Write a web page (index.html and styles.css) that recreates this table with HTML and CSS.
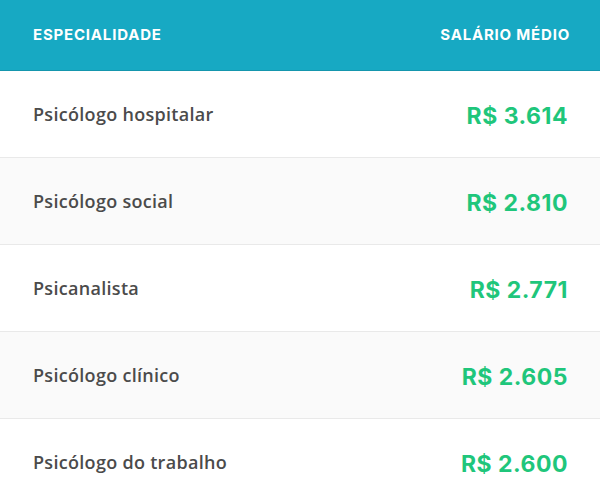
FILE: index.html
```html
<!DOCTYPE html>
<html lang="pt-BR">
<head>
<meta charset="utf-8">
<link rel="stylesheet" href="styles.css">
</head>
<body>
<table class="salary-table">
  <thead>
    <tr class="head-row">
      <th class="col-name">Especialidade</th>
      <th class="col-value">Salário médio</th>
    </tr>
  </thead>
  <tbody>
    <tr class="row"><td class="name">Psicólogo hospitalar</td><td class="value">R$ 3.614</td></tr>
    <tr class="row alt"><td class="name">Psicólogo social</td><td class="value">R$ 2.810</td></tr>
    <tr class="row"><td class="name">Psicanalista</td><td class="value">R$ 2.771</td></tr>
    <tr class="row alt"><td class="name">Psicólogo clínico</td><td class="value">R$ 2.605</td></tr>
    <tr class="row"><td class="name">Psicólogo do trabalho</td><td class="value">R$ 2.600</td></tr>
  </tbody>
</table>
</body>
</html>
```

FILE: styles.css
```css
html, body {
  margin: 0;
  padding: 0;
  background: #ffffff;
}

.salary-table {
  width: 600px;
  border-collapse: collapse;
  font-family: "Open Sans", "Liberation Sans", sans-serif;
}

.head-row {
  background: #17a9c3;
  height: 70px;
  border-bottom: 1px solid #1596ad;
}

.head-row th {
  color: #ffffff;
  font-family: "Inter", "Liberation Sans", sans-serif;
  font-weight: 700;
  font-size: 15px;
  text-transform: uppercase;
  letter-spacing: 0.8px;
  padding: 0 30px 0 33px;
  vertical-align: middle;
}

.col-name { text-align: left; }
.col-value { text-align: right; }

.row {
  height: 87px;
  border-top: 1px solid #e9e9e9;
  background: #ffffff;
}

.row.alt { background: #fafafa; }

.name {
  padding: 0 0 0 33px;
  font-size: 18px;
  font-weight: 600;
  letter-spacing: 0.3px;
  color: #4b4b4b;
  vertical-align: middle;
}

.value {
  padding: 4px 32px 0 0;
  text-align: right;
  font-family: "Inter", "Liberation Sans", sans-serif;
  font-weight: 700;
  font-size: 23px;
  letter-spacing: 0.5px;
  color: #1fc67b;
  vertical-align: middle;
}
```
